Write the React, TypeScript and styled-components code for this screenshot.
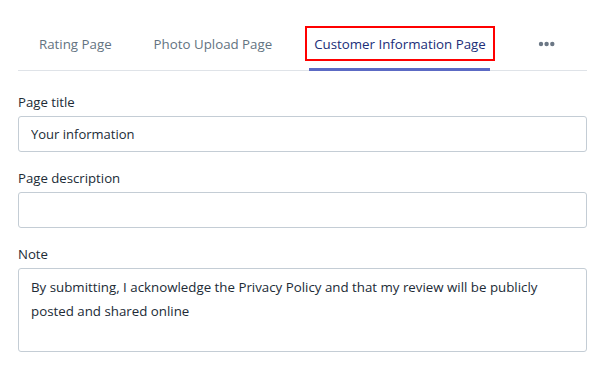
import React from "react";
import styled, { createGlobalStyle } from "styled-components";

const Global = createGlobalStyle`
  html, body { margin: 0; padding: 0; background: #ffffff; }
  body { font-family: "Open Sans", "Noto Sans", sans-serif; color: #212b36; }
  * { box-sizing: border-box; }
`;

const Page = styled.div`
  padding: 0 20px 0 18px;
`;

const TabList = styled.div`
  display: flex;
  align-items: stretch;
  margin-top: 26px;
  border-bottom: 1px solid #dfe3e8;
`;

const Tab = styled.div<{ $active?: boolean }>`
  position: relative;
  padding: 0 12px 9px;
  &::after {
    content: "";
    display: ${(p) => (p.$active ? "block" : "none")};
    position: absolute;
    left: 16px;
    right: 17px;
    bottom: -1px;
    height: 3px;
    background: #5c6ac4;
  }
`;

const TabBox = styled.div<{ $focused?: boolean; $wide?: boolean }>`
  height: 35px;
  display: flex;
  align-items: center;
  padding: 0 ${(p) => (p.$wide ? "16px" : "7px")};
  border: 2px solid ${(p) => (p.$focused ? "#ff0000" : "transparent")};
  font-size: 13.3px;
  line-height: 20px;
  white-space: nowrap;
  color: ${(p) => (p.$focused ? "#202e78" : "#637381")};
`;

const Form = styled.div`
  display: flex;
  flex-direction: column;
  gap: 16px;
  margin-top: 21px;
`;

const Field = styled.div`
  display: flex;
  flex-direction: column;
  gap: 4px;
`;

const Label = styled.label`
  font-size: 13.2px;
  line-height: 20px;
  color: #212b36;
`;

const Input = styled.input`
  height: 36px;
  width: 100%;
  padding: 0 12px;
  border: 1px solid #c4cdd5;
  border-radius: 3px;
  font-family: "Open Sans", "Noto Sans", sans-serif;
  font-size: 13px;
  color: #212b36;
  background: #fff;
  outline: none;
`;

const TextArea = styled.textarea`
  height: 84px;
  width: 100%;
  padding: 6px 12px;
  border: 1px solid #c4cdd5;
  border-radius: 3px;
  font-family: "Open Sans", "Noto Sans", sans-serif;
  font-size: 13.3px;
  line-height: 24px;
  color: #212b36;
  background: #fff;
  resize: none;
  outline: none;
  display: block;
`;

const Dots = () => (
  <svg width="20" height="20" viewBox="0 0 20 20" fill="#6b7785">
    <circle cx="4" cy="10" r="2.2" />
    <circle cx="9.6" cy="10" r="2.2" />
    <circle cx="15.3" cy="10" r="2.2" />
  </svg>
);

export default function App() {
  return (
    <>
      <Global />
      <Page>
        <TabList>
          <Tab>
            <TabBox>Rating Page</TabBox>
          </Tab>
          <Tab>
            <TabBox>Photo Upload Page</TabBox>
          </Tab>
          <Tab $active>
            <TabBox $focused>Customer Information Page</TabBox>
          </Tab>
          <Tab>
            <TabBox $wide>
              <Dots />
            </TabBox>
          </Tab>
        </TabList>
        <Form>
          <Field>
            <Label>Page title</Label>
            <Input defaultValue="Your information" />
          </Field>
          <Field>
            <Label>Page description</Label>
            <Input defaultValue="" />
          </Field>
          <Field>
            <Label>Note</Label>
            <TextArea
              readOnly
              defaultValue={
                "By submitting, I acknowledge the Privacy Policy and that my review will be publicly\nposted and shared online"
              }
            />
          </Field>
        </Form>
      </Page>
    </>
  );
}
